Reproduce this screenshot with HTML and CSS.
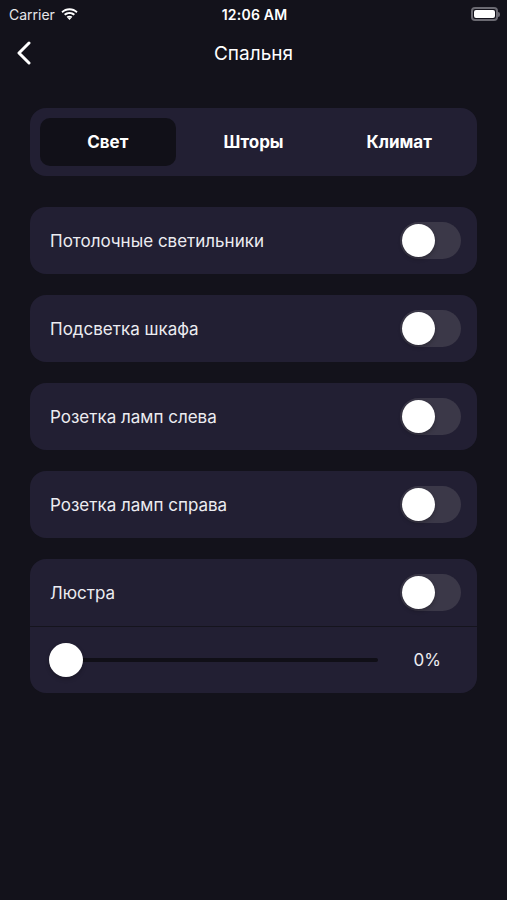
FILE: index.html
```html
<!DOCTYPE html>
<html lang="ru">
<head>
  <meta charset="UTF-8">
  <title>Спальня</title>
  <link rel="stylesheet" href="styles.css">
</head>
<body>

  <div class="status-bar">
    <div class="status-left">
      <span>Carrier</span>
      <svg class="wifi" width="17" height="13" viewBox="0 0 17 13">
        <path d="M8.5 2.2c2.6 0 5 1 6.8 2.7l1.3-1.4C14.4 1.4 11.6.2 8.5.2S2.6 1.4.4 3.5l1.3 1.4C3.5 3.2 5.9 2.2 8.5 2.2z" fill="#fff"/>
        <path d="M8.5 5.9c1.6 0 3.1.6 4.2 1.6l1.3-1.4C12.6 4.8 10.6 4 8.5 4S4.4 4.8 3 6.1l1.3 1.4c1.1-1 2.6-1.6 4.2-1.6z" fill="#fff"/>
        <path d="M8.5 9.4c.7 0 1.3.3 1.8.7L8.5 12 6.7 10.1c.5-.4 1.1-.7 1.8-.7z" fill="#fff"/>
        <path d="M8.5 7.7c1.1 0 2.1.4 2.9 1.1l-1.1 1.2C9.8 9.6 9.2 9.4 8.5 9.4S7.2 9.6 6.7 10L5.6 8.8c.8-.7 1.8-1.1 2.9-1.1z" fill="#fff"/>
      </svg>
    </div>
    <div class="status-time">12:06 AM</div>
    <div class="status-right">
      <div class="battery"><div class="battery-level"></div></div>
      <div class="battery-tip"></div>
    </div>
  </div>

  <div class="nav-bar">
    <svg class="back" width="16" height="24" viewBox="0 0 16 24">
      <path d="M13 2 L3 12 L13 22" fill="none" stroke="#fff" stroke-width="3" stroke-linecap="round" stroke-linejoin="round"/>
    </svg>
    <h1>Спальня</h1>
  </div>

  <main class="content">
    <div class="tabs">
      <div class="tab active">Свет</div>
      <div class="tab">Шторы</div>
      <div class="tab">Климат</div>
    </div>

    <div class="card">
      <div class="row">
        <span>Потолочные светильники</span>
        <div class="toggle"><div class="knob"></div></div>
      </div>
    </div>

    <div class="card">
      <div class="row">
        <span>Подсветка шкафа</span>
        <div class="toggle"><div class="knob"></div></div>
      </div>
    </div>

    <div class="card">
      <div class="row">
        <span>Розетка ламп слева</span>
        <div class="toggle"><div class="knob"></div></div>
      </div>
    </div>

    <div class="card">
      <div class="row">
        <span>Розетка ламп справа</span>
        <div class="toggle"><div class="knob"></div></div>
      </div>
    </div>

    <div class="card">
      <div class="row">
        <span>Люстра</span>
        <div class="toggle"><div class="knob"></div></div>
      </div>
      <div class="slider-row">
        <div class="slider">
          <div class="slider-track"></div>
          <div class="slider-thumb"></div>
        </div>
        <span class="slider-value">0%</span>
      </div>
    </div>
  </main>

</body>
</html>
```

FILE: styles.css
```css
* {
  box-sizing: border-box;
}

body {
  margin: 0;
  background: #13121b;
  color: #fff;
  font-family: Inter, 'Liberation Sans', sans-serif;
  min-height: 100vh;
}

.status-bar {
  height: 28px;
  display: flex;
  align-items: center;
  justify-content: space-between;
  padding: 0 7px 0 9px;
  font-size: 14px;
}

.status-left {
  display: flex;
  align-items: center;
  gap: 6px;
  width: 120px;
  color: #e6e6ea;
}

.status-time {
  font-weight: 600;
  letter-spacing: 0.2px;
}

.status-right {
  width: 120px;
  display: flex;
  justify-content: flex-end;
  align-items: center;
}

.battery {
  width: 27px;
  height: 14px;
  border: 2px solid #6b6a72;
  border-radius: 4px;
  padding: 1px;
}

.battery-level {
  width: 100%;
  height: 100%;
  background: #fff;
  border-radius: 2px;
}

.battery-tip {
  width: 2px;
  height: 5px;
  background: #6b6a72;
  border-radius: 0 2px 2px 0;
}

.nav-bar {
  height: 50px;
  display: flex;
  align-items: center;
  justify-content: center;
  position: relative;
}

.back {
  position: absolute;
  left: 16px;
  top: 13px;
}

.nav-bar h1 {
  margin: 0;
  font-size: 19px;
  font-weight: 400;
}

.content {
  padding: 30px 30px 0;
  display: flex;
  flex-direction: column;
  gap: 21px;
}

.tabs {
  background: #221f33;
  border-radius: 16px;
  padding: 10px;
  display: grid;
  grid-template-columns: repeat(3, 1fr);
  column-gap: 10px;
  margin-bottom: 10px;
}

.tab {
  height: 48px;
  display: flex;
  align-items: center;
  justify-content: center;
  font-size: 17px;
  font-weight: 700;
  border-radius: 10px;
}

.tab.active {
  background: #111018;
}

.card {
  background: #221f33;
  border-radius: 16px;
}

.row {
  height: 67px;
  display: flex;
  align-items: center;
  justify-content: space-between;
  padding: 0 16px 0 20px;
  font-size: 17px;
  color: #ececf1;
}

.toggle {
  width: 61px;
  height: 37px;
  border-radius: 19px;
  background: #3b3848;
  padding: 2px;
}

.knob {
  width: 33px;
  height: 33px;
  border-radius: 50%;
  background: #fff;
  box-shadow: 0 2px 4px rgba(0, 0, 0, 0.25);
}

.slider-row {
  border-top: 1px solid #15141d;
  height: 67px;
  display: flex;
  align-items: center;
  padding: 0 36px 0 19px;
  gap: 36px;
}

.slider {
  flex: 1;
  position: relative;
  height: 34px;
  display: flex;
  align-items: center;
}

.slider-track {
  width: 100%;
  height: 4px;
  border-radius: 2px;
  background: #100f17;
}

.slider-thumb {
  position: absolute;
  left: 0;
  top: 0;
  width: 34px;
  height: 34px;
  border-radius: 50%;
  background: #fff;
  box-shadow: 0 2px 4px rgba(0, 0, 0, 0.25);
}

.slider-value {
  font-size: 17px;
  color: #ececf1;
}
```
